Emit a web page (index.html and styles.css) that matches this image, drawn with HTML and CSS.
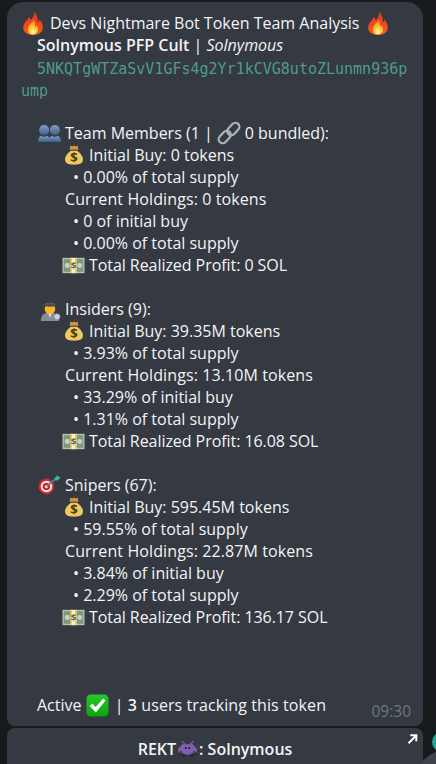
FILE: index.html
```html
<!DOCTYPE html>
<html lang="en">
<head>
<meta charset="utf-8">
<title>Devs Nightmare Bot</title>
<link rel="stylesheet" href="styles.css">
</head>
<body>
<svg class="defs" width="0" height="0" aria-hidden="true">
  <defs>
    <radialGradient id="flameCore" cx="50%" cy="85%" r="70%">
      <stop offset="0" stop-color="#fffbe0"/><stop offset=".4" stop-color="#ffd23c"/><stop offset="1" stop-color="#f9921a"/>
    </radialGradient>
    <linearGradient id="flameOuter" x1="0" y1="0" x2="0" y2="1">
      <stop offset="0" stop-color="#e5301f"/><stop offset="1" stop-color="#f3601c"/>
    </linearGradient>
    <linearGradient id="bust" x1="0" y1="0" x2="0" y2="1">
      <stop offset="0" stop-color="#7f9fc4"/><stop offset="1" stop-color="#3a5f86"/>
    </linearGradient>
    <linearGradient id="checkFill" x1="0" y1="0" x2="0" y2="1">
      <stop offset="0" stop-color="#2cc62c"/><stop offset="1" stop-color="#0aa50a"/>
    </linearGradient>
    <symbol id="fire" viewBox="0 0 24 24">
      <path fill="url(#flameOuter)" d="M13 .5c1 3.800-1.200 6.200-3.200 8.500C9.300 7.700 8.700 6.800 7.500 6c.3 2.500-5.300 5.200-5.300 10.800C2.200 21 6.500 24 12 24s9.800-3 9.800-7.600c0-3.400-1.500-6-3.200-8-.2 1.300-.8 2.300-1.800 2.800C17 7 16 3 13 .5z"/>
      <path fill="url(#flameCore)" d="M12.400 8.500c.4 2.800-5.600 4.800-5.600 10 0 3 2.300 5 5.200 5s5.200-2 5.200-4.900c0-2.100-1-3.500-2-4.400-.2.800-.6 1.300-1.300 1.600.5-2.700-.1-5.700-1.500-7.300z"/>
    </symbol>
    <symbol id="busts" viewBox="0 0 24 24">
      <g fill="url(#bust)">
        <circle cx="6.400" cy="8.500" r="5.300"/><path d="M0 20.800c0-4.200 1.500-5.600 3.600-6.400 1.800 1.200 3.900 1.200 5.800 0 2 .8 3.300 2.200 3.300 6.400z"/>
        <circle cx="17.600" cy="8.500" r="5.300"/><path d="M11.300 20.800c0-4.200 1.300-5.600 3.300-6.400 1.800 1.200 3.900 1.200 5.800 0 2 .8 3.600 2.200 3.600 6.400z"/>
      </g>
    </symbol>
    <symbol id="link" viewBox="0 0 24 24">
      <g fill="none" stroke="#a9b2ba" stroke-width="2.300">
        <rect x="12.300" y="1" width="8" height="14" rx="4" transform="rotate(43 16.300 8)"/>
        <rect x="3.700" y="9" width="8" height="14" rx="4" transform="rotate(43 7.700 16)"/>
      </g>
    </symbol>
    <symbol id="bag" viewBox="2.500 .5 19 23" preserveAspectRatio="none">
      <path fill="#c99a3f" d="M8 1l2 1.300L12 1l2 1.300L16 1l.5 4.700-2.200 1.500H9.700L7.500 5.700z"/>
      <path fill="#efc85f" d="M9 7h6c3.700 2.500 6.500 6.300 6.500 10.300 0 4.800-4 5.900-9.500 5.900s-9.500-1.100-9.500-5.900C2.500 13.300 5.300 9.500 9 7z"/>
      <path fill="#7a5a23" d="M8.500 5.600h7v1.700h-7z"/>
      <text x="12" y="20.500" text-anchor="middle" class="bag-sign">$</text>
    </symbol>
    <symbol id="cash" viewBox="0 0 24 24">
      <rect x=".5" y="4" width="23" height="16" fill="#b4c4b0"/>
      <rect x="1.800" y="5.400" width="20.400" height="13.200" fill="#7f977f"/>
      <circle cx="5.500" cy="12" r="2.600" fill="#c4d4c0"/><circle cx="18.500" cy="12" r="2.600" fill="#c4d4c0"/>
      <rect x="9" y="4" width="6" height="16" fill="#f5f0d8"/>
      <rect x="9" y="4" width="1.400" height="16" fill="#f2c84e"/><rect x="13.600" y="4" width="1.400" height="16" fill="#f2c84e"/>
      <text x="12" y="15.500" text-anchor="middle" class="cash-sign">$</text>
    </symbol>
    <symbol id="spy" viewBox="0 0 24 24">
      <path fill="#868d93" d="M3 24c0-5.500 2-8.500 9.500-8.500S22 18.500 22 24z"/>
      <path fill="#eceeef" d="M10.500 15.500h4l-2 5z"/>
      <circle cx="12.500" cy="11.500" r="5.500" fill="#fbb62a"/>
      <path fill="#3c3c3e" d="M8 7.500 8.700 1l3.800 1 3.800-1L17 7.500z"/>
      <path fill="#6a6c70" d="M8 5.500h9v1.800H8z"/>
      <ellipse cx="12.500" cy="7.500" rx="7.500" ry="1.500" fill="#4b4d50"/>
      <circle cx="19.800" cy="19.600" r="3.200" fill="#c3d6e4" stroke="#8a8f94"/>
    </symbol>
    <symbol id="dart" viewBox="0 0 24 24">
      <circle cx="8.800" cy="13" r="8.300" fill="#d4262b"/>
      <circle cx="8.800" cy="13" r="6" fill="#f4f0ee"/>
      <circle cx="8.800" cy="13" r="3.900" fill="#d4262b"/>
      <circle cx="8.800" cy="13" r="1.600" fill="#f4f0ee"/>
      <path stroke="#3d8f96" stroke-width="1.700" d="M8.800 13 19 4.500"/>
      <path fill="#43b0b0" d="M17.500 4 20.800 1.200l.7 2 2.200.3-3.200 3.300-3-.3z"/>
    </symbol>
    <symbol id="check" viewBox="0 0 24 24">
      <rect x=".5" y=".5" width="23" height="23" rx="4.500" fill="url(#checkFill)"/>
      <path fill="#fff" d="M3.800 12.500 6.600 10l3.500 3.500L18 4.800l2.300 2.100-10 12.300z"/>
    </symbol>
    <symbol id="invader" viewBox="1 0 11 9.500">
      <path fill="#7d5fad" d="M3 0h1v1h1v1h3V1h1V0h1v1H9v1h1v1h1v1h1v3h-1V6h-1v1H9v1H4V7H3V6H2v1H1V4h1V3h1V2h1V1H3z"/>
      <path fill="#2b2238" d="M5 3.500h1v1.300H5zM7 3.500h1v1.300H7zM3 8h2v1.500H3zM8 8h2v1.500H8zM1 7h1v1.500H1zM11 7h1v1.500h-1z"/>
    </symbol>
  </defs>
</svg>

<main class="chat">
  <article class="bubble">
    <p class="line title"><svg class="emoji fire"><use href="#fire"/></svg><span class="title-text">Devs Nightmare Bot Token Team Analysis</span><svg class="emoji fire"><use href="#fire"/></svg></p>
    <p class="line l1"><strong>Solnymous PFP Cult</strong> | <em>Solnymous</em></p>
    <p class="line code"><span class="code-first">5NKQTgWTZaSvV1GFs4g2Yr1kCVG8utoZLunmn936p</span><br>ump</p>
    <p class="line blank"></p>

    <p class="line head"><svg class="emoji big"><use href="#busts"/></svg>Team Members (1 |<svg class="emoji inline-link"><use href="#link"/></svg>0 bundled):</p>
    <p class="line sub"><svg class="emoji bag"><use href="#bag"/></svg>Initial Buy: 0 tokens</p>
    <p class="line dot">• 0.00% of total supply</p>
    <p class="line cur">Current Holdings: 0 tokens</p>
    <p class="line dot">• 0 of initial buy</p>
    <p class="line dot">• 0.00% of total supply</p>
    <p class="line money"><svg class="emoji big"><use href="#cash"/></svg>Total Realized Profit: 0 SOL</p>
    <p class="line blank"></p>

    <p class="line head"><svg class="emoji big"><use href="#spy"/></svg>Insiders (9):</p>
    <p class="line sub"><svg class="emoji bag"><use href="#bag"/></svg>Initial Buy: 39.35M tokens</p>
    <p class="line dot">• 3.93% of total supply</p>
    <p class="line cur">Current Holdings: 13.10M tokens</p>
    <p class="line dot">• 33.29% of initial buy</p>
    <p class="line dot">• 1.31% of total supply</p>
    <p class="line money"><svg class="emoji big"><use href="#cash"/></svg>Total Realized Profit: 16.08 SOL</p>
    <p class="line blank"></p>

    <p class="line head"><svg class="emoji big"><use href="#dart"/></svg>Snipers (67):</p>
    <p class="line sub"><svg class="emoji bag"><use href="#bag"/></svg>Initial Buy: 595.45M tokens</p>
    <p class="line dot">• 59.55% of total supply</p>
    <p class="line cur">Current Holdings: 22.87M tokens</p>
    <p class="line dot">• 3.84% of initial buy</p>
    <p class="line dot">• 2.29% of total supply</p>
    <p class="line money"><svg class="emoji big"><use href="#cash"/></svg>Total Realized Profit: 136.17 SOL</p>

    <div class="footer">
      <p class="line l1 status">Active <svg class="emoji check"><use href="#check"/></svg><span class="tracking">| <strong>3</strong> users tracking this token</span></p>
      <time class="time">09:30</time>
    </div>
  </article>

  <button class="action" type="button">
    <span>REKT</span><svg class="emoji invader"><use href="#invader"/></svg><span>: Solnymous</span>
    <svg class="open" viewBox="0 0 10 10"><path fill="none" stroke="#fff" stroke-width="2" d="M1 9.200 8.400 1.800M2.800 1.200h6v6"/></svg>
  </button>
</main>
<div class="peek">
  <span class="peek-teal"></span>
  <span class="peek-gray"></span>
</div>
</body>
</html>
```
FILE: styles.css
```css
* { box-sizing: border-box; }
html, body { margin: 0; height: 100%; }
body {
  width: 436px;
  height: 764px;
  overflow: hidden;
  position: relative;
  background: #17191d;
  color: #f2f4f6;
  font-family: "Open Sans", sans-serif;
  font-size: 16px;
  line-height: 22px;
}
.defs { position: absolute; }
.chat {
  display: flex;
  flex-direction: column;
  gap: 2px;
  padding: 2px 13px 0 7px;
}
.bubble {
  height: 724px;
  display: flex;
  flex-direction: column;
  padding: 10px 14px;
  background: #353941;
  border-radius: 16px 16px 8px 8px;
}
.line { margin: 0; height: 22px; white-space: nowrap; }
.blank { height: 22px; }
.title { display: flex; align-items: center; }
.title-text { margin: 0 7px 0 5px; }
.l1 { padding-left: 16px; }
.l1 strong { font-weight: 600; }
.l1 em { font-style: italic; }
.code {
  height: 44px;
  padding-top: 2px;
  font-family: "DejaVu Sans Mono", monospace;
  font-size: 15px;
  color: #4f9c88;
}
.code-first { margin-left: 16px; }
.head { padding-left: 17px; display: flex; align-items: center; }
.sub { padding-left: 44px; display: flex; align-items: center; }
.dot { padding-left: 52px; }
.cur { padding-left: 44px; letter-spacing: .1px; }
.money { padding-left: 41px; display: flex; align-items: center; letter-spacing: -.06px; }
.emoji { flex: none; display: inline-block; }
.fire { width: 24px; height: 24px; }
.big { width: 23px; height: 23px; margin-right: 4px; }
.bag { width: 18px; height: 20px; margin: -1px 6px 0 0; }
.inline-link { width: 24px; height: 24px; margin: 0 4px; }
.bag-sign { font: 700 14px "Open Sans", sans-serif; fill: #4a3a18; }
.cash-sign { font: 700 10px "Open Sans", sans-serif; fill: #5c6a50; }
.footer {
  margin-top: auto;
  display: flex;
  justify-content: space-between;
  align-items: flex-end;
}
.status { display: flex; align-items: center; white-space: pre; }
.check { width: 23px; height: 23px; margin-right: 6px; }
.tracking { letter-spacing: .09px; }
.time { font-size: 15.5px; line-height: 20px; color: #6e7680; margin-right: -2px; position: relative; top: 5px; }
.action {
  position: relative;
  display: flex;
  align-items: center;
  justify-content: center;
  height: 36px;
  border: 0;
  padding: 6px 0 0;
  border-radius: 8px 8px 0 0;
  background: #353941;
  color: #f2f4f6;
  font-family: "Open Sans", sans-serif;
  font-size: 16px;
  font-weight: 600;
}
.invader { width: 19px; height: 16px; margin: 0 2px; }
.open { position: absolute; top: 6px; right: 5px; width: 11px; height: 10px; }
.peek {
  position: absolute;
  left: 418px;
  top: 728px;
  width: 18px;
  height: 36px;
  overflow: hidden;
}
.peek-teal {
  position: absolute; left: 14px; top: 4px; width: 20px; height: 20px;
  border-radius: 50%; background: #1ea88f;
}
.peek-gray {
  position: absolute; left: -5px; top: 21px; width: 74px; height: 74px;
  border-radius: 50%; background: #3f444c;
}
```
